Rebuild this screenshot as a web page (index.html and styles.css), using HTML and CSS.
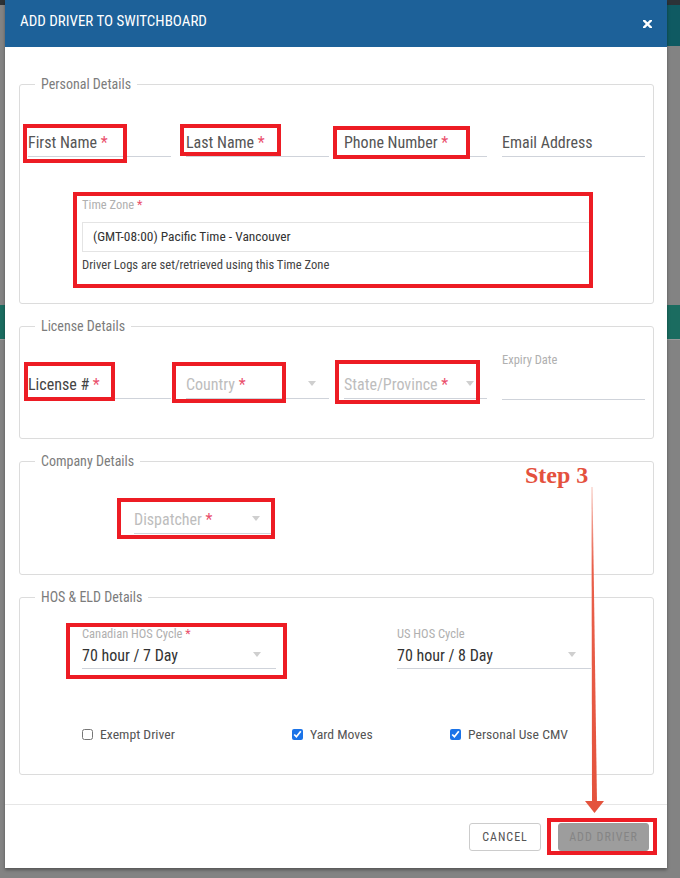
FILE: index.html
```html
<!DOCTYPE html>
<html lang="en">
<head>
<meta charset="utf-8">
<title>Add Driver to Switchboard</title>
<link rel="stylesheet" href="styles.css">
</head>
<body>
<div class="stage">
  <div class="modal">
    <div class="modal-header">
      <h1 class="modal-title">ADD DRIVER TO SWITCHBOARD</h1>
      <span class="close" aria-label="Close">
        <svg width="9" height="8" viewBox="0 0 9 8"><path d="M1 0.5 L8 7.5 M8 0.5 L1 7.5" stroke="#fff" stroke-width="2.4" stroke-linecap="square" fill="none"/></svg>
      </span>
    </div>

    <div class="modal-body">
      <fieldset class="group">
        <legend>Personal Details</legend>
        <div class="row4">
          <div class="tf">First Name <span class="req">*</span></div>
          <div class="tf">Last Name <span class="req">*</span></div>
          <div class="tf">Phone Number <span class="req">*</span></div>
          <div class="tf">Email Address</div>
        </div>
        <div class="tz">
          <div class="small-label">Time Zone <span class="req">*</span></div>
          <div class="tz-select">(GMT-08:00) Pacific Time - Vancouver</div>
          <div class="help">Driver Logs are set/retrieved using this Time Zone</div>
        </div>
      </fieldset>

      <fieldset class="group group-license">
        <legend>License Details</legend>
        <div class="row4 row-license">
          <div class="tf tf-dark">License # <span class="req">*</span></div>
          <div class="tf sf"><span>Country <span class="req">*</span></span><span class="caret"></span></div>
          <div class="tf sf"><span>State/Province <span class="req">*</span></span><span class="caret"></span></div>
          <div class="float-field">
            <div class="small-label">Expiry Date</div>
            <div class="float-input"></div>
          </div>
        </div>
      </fieldset>

      <fieldset class="group group-company">
        <legend>Company Details</legend>
        <div class="tf sf dispatcher"><span>Dispatcher <span class="req">*</span></span><span class="caret"></span></div>
      </fieldset>

      <fieldset class="group group-hos">
        <legend>HOS &amp; ELD Details</legend>
        <div class="hos-row">
          <div class="hos-field">
            <div class="small-label">Canadian HOS Cycle <span class="req">*</span></div>
            <div class="hos-value"><span>70 hour / 7 Day</span><span class="caret"></span></div>
          </div>
          <div class="hos-field">
            <div class="small-label">US HOS Cycle</div>
            <div class="hos-value"><span>70 hour / 8 Day</span><span class="caret"></span></div>
          </div>
        </div>
        <div class="checks">
          <label class="check"><input type="checkbox"> Exempt Driver</label>
          <label class="check"><input type="checkbox" checked> Yard Moves</label>
          <label class="check"><input type="checkbox" checked> Personal Use CMV</label>
        </div>
      </fieldset>
    </div>

    <div class="modal-footer">
      <button class="btn btn-cancel">CANCEL</button>
      <button class="btn btn-add">ADD DRIVER</button>
    </div>
  </div>

  <div class="annotations">
    <div class="mark m-first"></div>
    <div class="mark m-last"></div>
    <div class="mark m-phone"></div>
    <div class="mark m-tz"></div>
    <div class="mark m-license"></div>
    <div class="mark m-country"></div>
    <div class="mark m-state"></div>
    <div class="mark m-dispatcher"></div>
    <div class="mark m-canadian"></div>
    <div class="mark m-add"></div>
    <div class="step-label">Step 3</div>
    <svg class="step-arrow" width="30" height="330" viewBox="0 0 30 330">
      <defs>
        <linearGradient id="arrowGrad" x1="0" y1="0" x2="0" y2="1">
          <stop offset="0" stop-color="#f6c2b8"/>
          <stop offset="0.25" stop-color="#e9604b"/>
          <stop offset="1" stop-color="#e4533d"/>
        </linearGradient>
      </defs>
      <polygon points="11.5,0 12.5,0 17,316 12,316" fill="url(#arrowGrad)"/>
      <polygon points="5,314 24,314 14.5,326" fill="#e4533d"/>
    </svg>
  </div>
</div>
</body>
</html>
```

FILE: styles.css
```css
html, body {
  margin: 0;
  padding: 0;
}

body {
  font-family: "Liberation Sans Narrow", "Roboto Condensed", Roboto, "Liberation Sans", sans-serif;
  background:
    linear-gradient(#0f5a62, #0f5a62) right 5px / 13px 41px no-repeat,
    linear-gradient(to bottom, #2c3237 0, #2c3237 5px, transparent 5px) top left / 100% 5px no-repeat,
    linear-gradient(to bottom, transparent 305px, #1b6c60 305px, #1b6c60 339px, #9a9a9a 339px, #9a9a9a 340px, transparent 340px),
    #838383;
}

.stage {
  position: relative;
  width: 680px;
  height: 878px;
  overflow: hidden;
}

/* ---------- Modal ---------- */
.modal {
  margin-left: 5px;
  width: 662px;
  background: #fff;
  box-shadow: 0 2px 3px rgba(0, 0, 0, 0.35);
}

.modal-header {
  height: 47px;
  box-sizing: border-box;
  padding: 12px 15px 0 15px;
  background: #1d6199;
  display: flex;
  justify-content: space-between;
  align-items: flex-start;
}

.modal-title {
  margin: 0;
  font-size: 15px;
  line-height: 18px;
  font-weight: normal;
  color: #fff;
}

.close {
  display: block;
  margin-top: 8px;
  line-height: 0;
}

.modal-body {
  padding: 29px 13px 29px 14px;
}

/* ---------- Fieldsets ---------- */
.group {
  margin: 0 0 14px;
  padding: 0 8px 30px;
  border: 1px solid #dcdcdc;
  border-radius: 3px;
  min-width: 0;
}

.group:last-child {
  margin-bottom: 0;
}

.group legend {
  margin-left: 7px;
  padding: 0 6px;
  font-size: 14px;
  line-height: 16px;
  color: #7c7c7c;
}

.req {
  color: #ea4f6c;
}

/* ---------- Text / select fields ---------- */
.row4 {
  display: grid;
  grid-template-columns: repeat(4, 1fr);
  column-gap: 15px;
  margin-top: 41px;
  align-items: start;
}

.tf {
  font-size: 16px;
  line-height: 20px;
  color: #555;
  padding-bottom: 3px;
  border-bottom: 1px solid #cfd3da;
  white-space: nowrap;
}

.tf-dark {
  color: #444;
}

.sf {
  display: flex;
  justify-content: space-between;
  align-items: center;
  color: #bdbdbd;
}

.caret {
  width: 0;
  height: 0;
  border-left: 4.5px solid transparent;
  border-right: 4.5px solid transparent;
  border-top: 5px solid #cfcfcf;
  margin-right: 13px;
  margin-top: -3px;
}

.small-label {
  font-size: 12.5px;
  line-height: 16px;
  color: #b0b0b0;
}

/* Time zone */
.tz {
  width: 509px;
  margin: 40px 0 0 54px;
}

.tz-select {
  margin-top: 9px;
  height: 30px;
  box-sizing: border-box;
  border: 1px solid #e4e4e4;
  padding-left: 10px;
  font-size: 13.4px;
  line-height: 28px;
  color: #333;
}

.help {
  margin-top: 5px;
  font-size: 12.6px;
  line-height: 16px;
  color: #444;
}

/* License */
.group-license {
  padding-bottom: 38px;
}

.row-license {
  margin-top: 18px;
}

.row-license .tf {
  margin-top: 23px;
}

.float-input {
  height: 32px;
  box-sizing: border-box;
  border-bottom: 1px solid #cfd3da;
}

/* Company */
.group-company {
  padding-bottom: 40px;
}

.dispatcher {
  width: 138px;
  margin: 41px 0 0 106px;
}

.dispatcher .caret {
  margin-right: 12px;
}

/* HOS */
.hos-row {
  display: grid;
  grid-template-columns: 194px 194px;
  column-gap: 121px;
  margin: 21px 0 0 54px;
}

.hos-value {
  margin-top: 4px;
  display: flex;
  justify-content: space-between;
  align-items: center;
  font-size: 16px;
  line-height: 20px;
  color: #333;
  padding-bottom: 2px;
  border-bottom: 1px solid #cfd3da;
}

.hos-value .caret {
  margin-right: 15px;
}

.checks {
  display: grid;
  grid-template-columns: 210px 158px auto;
  margin: 55px 0 0 54px;
}

.check {
  display: flex;
  align-items: center;
  gap: 7px;
  font-size: 13.7px;
  line-height: 20px;
  color: #555;
}

.check input {
  width: 11px;
  height: 11px;
  margin: 0;
  accent-color: #1a73e8;
}

/* ---------- Footer ---------- */
.modal-footer {
  border-top: 1px solid #e6e6e6;
  padding: 18px 18px 17px;
  display: flex;
  justify-content: flex-end;
  gap: 17px;
}

.btn {
  height: 28px;
  box-sizing: border-box;
  font-family: inherit;
  font-size: 12px;
  letter-spacing: 1px;
  border-radius: 3px;
  padding: 0;
  cursor: pointer;
}

.btn-cancel {
  width: 72px;
  background: #fff;
  color: #555;
  border: 1px solid #cccccc;
}

.btn-add {
  width: 91px;
  background: #9d9d9d;
  color: #858585;
  border: 1px solid #9d9d9d;
}

/* ---------- Annotation overlay ---------- */
.annotations {
  position: absolute;
  inset: 0;
  pointer-events: none;
}

.mark {
  position: absolute;
  box-sizing: border-box;
  border: 4px solid #ed1c24;
}

.m-first      { left: 23px;  top: 124px; width: 104px; height: 39px; }
.m-last       { left: 180px; top: 124px; width: 101px; height: 32px; }
.m-phone      { left: 333px; top: 126px; width: 137px; height: 33px; }
.m-tz         { left: 73px;  top: 192px; width: 520px; height: 96px; }
.m-license    { left: 24px;  top: 362px; width: 91px;  height: 39px; }
.m-country    { left: 172px; top: 362px; width: 114px; height: 41px; }
.m-state      { left: 335px; top: 360px; width: 145px; height: 44px; }
.m-dispatcher { left: 117px; top: 498px; width: 158px; height: 41px; }
.m-canadian   { left: 66px;  top: 623px; width: 221px; height: 56px; }
.m-add        { left: 547px; top: 818px; width: 110px; height: 37px; }

.step-label {
  position: absolute;
  left: 525px;
  top: 463px;
  font-family: "Liberation Serif", "Times New Roman", serif;
  font-weight: bold;
  font-size: 24px;
  line-height: 24px;
  color: #e4513d;
}

.step-arrow {
  position: absolute;
  left: 580px;
  top: 487px;
}
```
